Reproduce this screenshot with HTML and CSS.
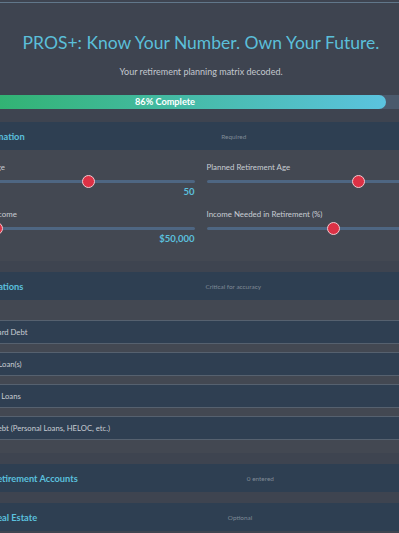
FILE: index.html
```html
<!DOCTYPE html>
<html lang="en">
<head>
  <meta charset="UTF-8">
  <meta name="viewport" content="width=device-width, initial-scale=1.0">
  <title>PROS+ Retirement Matrix</title>
  <link rel="stylesheet" href="styles.css">
</head>
<body>
<div class="app">
  <header class="hero">
    <h1>PROS+: Know Your Number. Own Your Future.</h1>
    <p class="sub">Your retirement planning matrix decoded.</p>
    <div class="progress">
      <div class="progress-fill" style="width: 86%">86% Complete</div>
    </div>
  </header>

  <section class="sec">
    <div class="sec-head">
      <span class="sec-title">Information</span>
      <span class="sec-note">Required</span>
      <span class="chev">&#9662;</span>
    </div>
    <div class="sec-body fields">
      <label class="field">
        <span class="lbl">Current Age</span>
        <input type="range" min="20" max="75" value="50">
        <span class="val">50</span>
      </label>
      <label class="field">
        <span class="lbl">Planned Retirement Age</span>
        <input type="range" min="45" max="75" value="65">
        <span class="val">65</span>
      </label>
      <label class="field">
        <span class="lbl">Current Income</span>
        <input type="range" min="0" max="400000" step="1000" value="50000">
        <span class="val">$50,000</span>
      </label>
      <label class="field">
        <span class="lbl">Income Needed in Retirement (%)</span>
        <input type="range" min="40" max="100" value="73">
        <span class="val">73%</span>
      </label>
    </div>
  </section>

  <section class="sec">
    <div class="sec-head">
      <span class="sec-title">Obligations</span>
      <span class="sec-note">Critical for accuracy</span>
      <span class="chev">&#9662;</span>
    </div>
    <div class="sec-body list">
      <div class="row">Credit Card Debt</div>
      <div class="row">Student Loan(s)</div>
      <div class="row">Business Loans</div>
      <div class="row">Other Debt (Personal Loans, HELOC, etc.)</div>
    </div>
  </section>

  <section class="sec">
    <div class="sec-head">
      <span class="sec-title">My Retirement Accounts</span>
      <span class="sec-note">0 entered</span>
      <span class="chev">&#9662;</span>
    </div>
  </section>

  <section class="sec">
    <div class="sec-head">
      <span class="sec-title">My Real Estate</span>
      <span class="sec-note">Optional</span>
      <span class="chev">&#9662;</span>
    </div>
  </section>
</div>
</body>
</html>
```

FILE: styles.css
```css
* {
  padding: 0;
  margin: 0;
  box-sizing: border-box;
}

body {
  background: #3e4450;
  font-family: "Segoe UI", Lato, "Open Sans", sans-serif;
  color: #c8cdd3;
  overflow: hidden;
}

.app {
  width: 514px;
  margin-left: -56px;
  margin-top: 2px;
  border-top: 1px solid #61778a;
}

.hero {
  text-align: center;
  padding-top: 27px;
}

h1 {
  font-weight: 400;
  font-size: 17.5px;
  line-height: 26px;
  color: #5bbfd9;
}

.sub {
  font-size: 9px;
  line-height: 12px;
  margin-top: 10px;
  color: #c3c8cf;
}

.progress {
  margin: 17px 0 13px;
  height: 14px;
  border-radius: 7px;
  background: #4b5a6c;
  overflow: hidden;
}

.progress-fill {
  height: 100%;
  border-radius: 7px;
  background: linear-gradient(90deg, #2cb164, #5bc3df);
  color: #fff;
  font-weight: 700;
  font-size: 9.2px;
  line-height: 14px;
  text-align: center;
}

.sec {
  margin-bottom: 11px;
}

.sec-head {
  display: flex;
  justify-content: space-between;
  align-items: center;
  height: 28px;
  padding: 0 10px 0 32px;
  background: #2e3f52;
}

.sec-title {
  font-weight: 700;
  font-size: 9.25px;
  color: #5bc0de;
}

.sec-note {
  font-size: 6.4px;
  color: #7f8a96;
}

.chev {
  width: 5px;
  font-size: 7px;
  color: #7f8a96;
}

.sec-body {
  background: #434852;
}

.fields {
  display: grid;
  grid-template-columns: 1fr 1fr;
  column-gap: 12px;
  row-gap: 10px;
  padding: 11px 20px 16px 19px;
}

.field {
  display: flex;
  flex-direction: column;
}

.lbl {
  font-size: 7.9px;
  line-height: 12px;
  margin-bottom: 2px;
}

.val {
  align-self: flex-end;
  font-weight: 700;
  font-size: 9.5px;
  line-height: 12px;
  margin-top: -1px;
  color: #5bc0de;
}

input[type="range"] {
  -webkit-appearance: none;
  appearance: none;
  width: 100%;
  height: 12px;
  background: transparent;
}

input[type="range"]::-webkit-slider-runnable-track {
  height: 3px;
  border-radius: 2px;
  background: #4e6682;
}

input[type="range"]::-webkit-slider-thumb {
  -webkit-appearance: none;
  width: 13px;
  height: 13px;
  margin-top: -5px;
  border-radius: 50%;
  background: #dc3145;
  border: 1.5px solid #f2c9cf;
}

.list {
  display: flex;
  flex-direction: column;
  gap: 8px;
  padding: 20px 13px 13px;
}

.row {
  height: 24px;
  padding-left: 13px;
  display: flex;
  align-items: center;
  background: #2f3f52;
  border-top: 1px solid #56616f;
  border-bottom: 1px solid #56616f;
  font-size: 7.7px;
}
```
